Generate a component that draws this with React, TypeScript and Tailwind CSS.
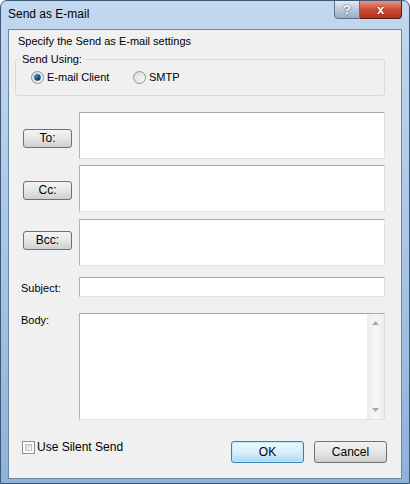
import React from "react";

const Radio = ({ checked }: { checked?: boolean }) => (
  <span className="w-[13px] h-[13px] rounded-full border border-[#8e8f8f] bg-gradient-to-br from-[#d8d8d8] to-[#fbfbfb] flex items-center justify-center shrink-0">
    {checked && (
      <span className="w-[7px] h-[7px] rounded-full bg-gradient-to-br from-[#6aa8d8] via-[#1d5f96] to-[#0d2f4f] border border-[#1b4a70]" />
    )}
  </span>
);

const FieldButton = ({ label, top }: { label: string; top: string }) => (
  <button
    className={`${top} ml-[14px] w-[49px] h-[19px] rounded-[3px] border border-[#707070] bg-gradient-to-b from-[#f4f4f4] via-[#e6e6e6] to-[#cfcfcf] text-[12px] font-normal leading-[17px] text-black`}
  >
    {label}
  </button>
);

const TextBox = ({ height }: { height: string }) => (
  <div
    className={`${height} w-[306px] bg-white border border-[#dde2e8] border-t-[#a5a8ae] border-l-[#b0b3b8]`}
  />
);

const App = () => {
  return (
    <div className="w-[410px] h-[484px] flex flex-col bg-gradient-to-b from-[#c2d8ef] via-[#a9c6e6] to-[#8fb2da] border border-[#3f5877] rounded-t-[7px] overflow-hidden font-['Liberation_Sans',Arial,sans-serif] text-[11px] text-black">
      <div className="h-[28px] shrink-0 flex items-start justify-between pl-[7px] pr-[7px]">
        <span className="mt-[6px] text-[12px] leading-[14px]">Send as E-mail</span>
        <div className="flex -mt-[1px]">
          <div className="w-[26px] h-[19px] rounded-bl-[4px] border border-[#5f7086] bg-gradient-to-b from-[#e4ebf3] via-[#b9c9da] to-[#98aec6] flex items-center justify-center text-[13px] font-bold text-white [text-shadow:0_0_2px_#334]">
            ?
          </div>
          <div className="w-[42px] h-[19px] rounded-br-[4px] border border-l-0 border-[#4e1f18] bg-gradient-to-b from-[#e29a88] via-[#cc4a32] to-[#b8321c] flex items-center justify-center text-[13px] font-bold text-white [text-shadow:0_0_2px_#511]">
            x
          </div>
        </div>
      </div>

      <div className="mx-[7px] h-[450px] shrink-0 border border-[#6f87a3] bg-[#f0f0f0] flex flex-col">
        <div className="mt-[5px] ml-[9px] leading-[13px]">
          Specify the Send as E-mail settings
        </div>

        <fieldset className="ml-[6px] mt-[5px] w-[370px] pt-[5px] pb-[11px] border border-[#d5dbe0] rounded-[3px]">
          <legend className="ml-[4px] px-[2px] leading-[13px]">Send Using:</legend>
          <div className="flex items-center h-[13px] pl-[15px]">
            <label className="flex items-center gap-[3px] w-[102px]">
              <Radio checked />
              <span className="leading-[13px]">E-mail Client</span>
            </label>
            <label className="flex items-center gap-[3px]">
              <Radio />
              <span className="leading-[13px]">SMTP</span>
            </label>
          </div>
        </fieldset>

        <div className="mt-[16px] flex">
          <div className="w-[70px] flex items-start">
            <FieldButton label="To:" top="mt-[17px]" />
          </div>
          <TextBox height="h-[47px]" />
        </div>
        <div className="mt-[6px] flex">
          <div className="w-[70px] flex items-start">
            <FieldButton label="Cc:" top="mt-[16px]" />
          </div>
          <TextBox height="h-[47px]" />
        </div>
        <div className="mt-[7px] flex">
          <div className="w-[70px] flex items-start">
            <FieldButton label="Bcc:" top="mt-[12px]" />
          </div>
          <TextBox height="h-[47px]" />
        </div>

        <div className="mt-[11px] flex">
          <div className="w-[70px] pl-[12px] pt-[5px] leading-[13px]">Subject:</div>
          <TextBox height="h-[20px]" />
        </div>

        <div className="mt-[16px] flex">
          <div className="w-[70px] pl-[12px] pt-[1px] leading-[13px]">Body:</div>
          <div className="w-[306px] h-[107px] bg-white border border-[#dde2e8] border-t-[#a5a8ae] border-l-[#b0b3b8] flex justify-end">
            <div className="w-[17px] h-full bg-gradient-to-r from-[#ececec] via-[#f6f6f6] to-[#ececec] flex flex-col justify-between items-center py-[7px]">
              <svg width="7" height="4" viewBox="0 0 7 4">
                <polygon points="0,4 7,4 3.5,0" fill="#a8a8a8" />
              </svg>
              <svg width="7" height="4" viewBox="0 0 7 4">
                <polygon points="0,0 7,0 3.5,4" fill="#a8a8a8" />
              </svg>
            </div>
          </div>
        </div>

        <div className="mt-[21px] flex items-start">
          <label className="ml-[13px] flex items-center gap-[2px] h-[13px]">
            <span className="w-[13px] h-[13px] border border-[#8e8f8f] bg-white p-[2px] shrink-0">
              <span className="block w-full h-full bg-gradient-to-br from-[#d6d6d6] to-[#f8f8f8] border border-[#c4c4c4]" />
            </span>
            <span className="leading-[13px] text-[12px]">Use Silent Send</span>
          </label>
          <div className="ml-auto mr-[14px] flex gap-[10px]">
            <button className="w-[73px] h-[22px] rounded-[3px] border border-[#3c7fb1] bg-gradient-to-b from-[#eaf6fd] via-[#d9f0fc] to-[#a7d9f5] shadow-[inset_0_0_0_1px_#c6e6f8] text-[12px] leading-[20px]">
              OK
            </button>
            <button className="w-[73px] h-[22px] rounded-[3px] border border-[#707070] bg-gradient-to-b from-[#f2f2f2] via-[#e6e6e6] to-[#cfcfcf] text-[12px] leading-[20px]">
              Cancel
            </button>
          </div>
        </div>
      </div>
    </div>
  );
};

export default App;
